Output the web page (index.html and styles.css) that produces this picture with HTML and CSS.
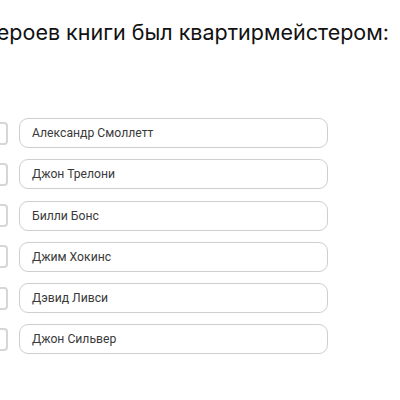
FILE: index.html
```html
<!DOCTYPE html>
<html lang="ru">
<head>
<meta charset="utf-8">
<link rel="stylesheet" href="styles.css">
</head>
<body>
<div class="page">
  <div class="question"><span>Кто из героев книги был квартирмейстером:</span></div>
  <ul class="options">
    <li class="option"><span class="check"></span><span class="field">Александр Смоллетт</span></li>
    <li class="option"><span class="check"></span><span class="field">Джон Трелони</span></li>
    <li class="option"><span class="check"></span><span class="field">Билли Бонс</span></li>
    <li class="option"><span class="check"></span><span class="field">Джим Хокинс</span></li>
    <li class="option"><span class="check"></span><span class="field">Дэвид Ливси</span></li>
    <li class="option"><span class="check"></span><span class="field">Джон Сильвер</span></li>
  </ul>
</div>
</body>
</html>
```
FILE: styles.css
```css
html, body {
  margin: 0;
  padding: 0;
  background: #fff;
  overflow: hidden;
}
.page {
  width: 400px;
  height: 400px;
  overflow: hidden;
  padding-top: 1px;
  box-sizing: border-box;
}
.question {
  margin: 18px 0 0 0;
  width: 389px;
  display: flex;
  justify-content: flex-end;
  white-space: nowrap;
  font-family: Inter, sans-serif;
  font-weight: 400;
  font-size: 21.5px;
  line-height: 26px;
  color: #111;
}
.options {
  list-style: none;
  margin: 73px 0 0 0;
  padding: 0;
  display: flex;
  flex-direction: column;
  gap: 11.3px;
}
.option {
  display: flex;
  align-items: center;
  gap: 11px;
  margin-left: -15px;
}
.check {
  width: 19px;
  height: 19px;
  border: 2px solid #d6d6d6;
  border-radius: 4px;
  flex: none;
}
.field {
  box-sizing: border-box;
  width: 309px;
  height: 30px;
  border: 1px solid #cfcfcf;
  border-radius: 9px;
  padding: 0 12px;
  display: flex;
  align-items: center;
  font-family: Roboto, sans-serif;
  font-size: 12.2px;
  color: #3a3a3a;
}
```
